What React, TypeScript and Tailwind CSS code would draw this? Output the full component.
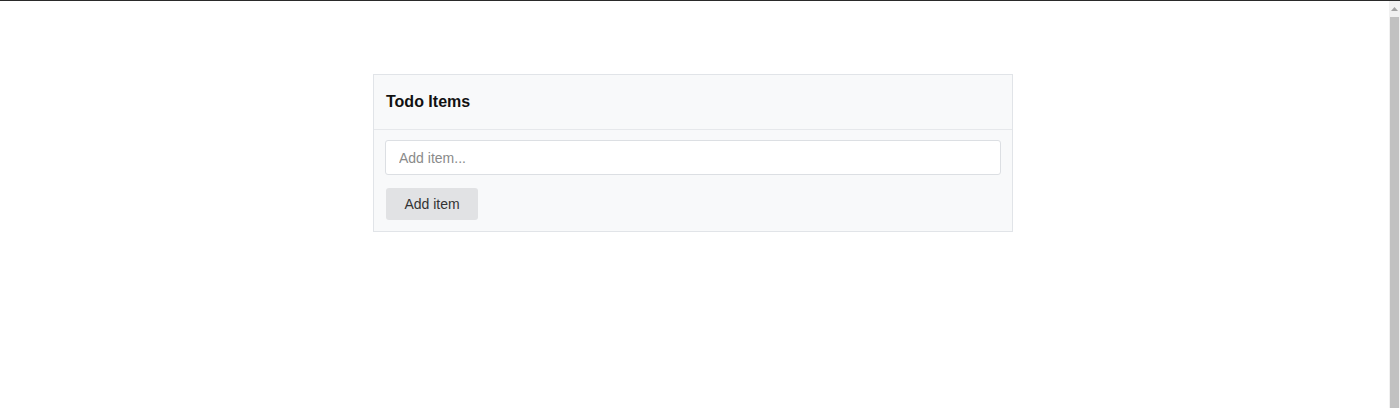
const ScrollBar = () => (
  <div className="flex w-[11px] shrink-0 flex-col bg-[#f1f1f1]">
    <div className="flex h-[16px] items-center justify-center">
      <svg width="7" height="4" viewBox="0 0 7 4">
        <path d="M3.5 0 L7 4 L0 4 Z" fill="#a3a3a3" />
      </svg>
    </div>
    <div className="mx-px flex-1 bg-[#c1c1c1]" />
  </div>
);

const App = () => {
  return (
    <div className="flex h-[408px] flex-col overflow-hidden bg-white font-['Liberation_Sans',Arial,sans-serif]">
      <div className="h-px shrink-0 bg-[#2a2a2a]" />
      <div className="flex flex-1">
        <div className="flex-1 pr-[3px]">
          <div className="mx-auto w-[640px] pt-[73px]">
            <div className="border border-[#e1e4e8] bg-[#f8f9fa]">
              <div className="flex h-[55px] items-center border-b border-[#e6e8eb] px-3">
                <h5 className="text-[16px] font-bold text-[#111]">Todo Items</h5>
              </div>
              <div className="px-[11px] pt-[10px] pb-[11px]">
                <input
                  type="text"
                  placeholder="Add item..."
                  className="block h-[35px] w-full rounded-[3px] border border-[#dcdfe3] bg-white px-[13px] text-[14px] text-[#333] placeholder:text-[#8a8a8a] outline-none"
                />
                <button className="mt-[13px] ml-px h-[32px] w-[92px] rounded-[3px] bg-[#e1e2e4] text-[14px] text-[#333]">
                  Add item
                </button>
              </div>
            </div>
          </div>
        </div>
        <ScrollBar />
      </div>
    </div>
  );
};

export default App;
